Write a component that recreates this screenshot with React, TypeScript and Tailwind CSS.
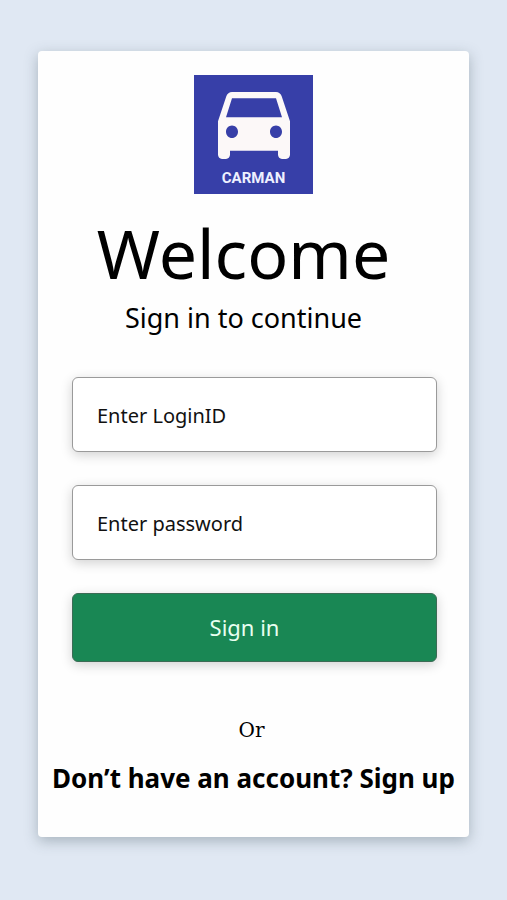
import { useState } from "react";

interface FieldProps {
  id: string;
  type: string;
  label: string;
  value: string;
  onChange: (value: string) => void;
}

const Logo: React.FC = () => {
  return (
    <div className="flex flex-col items-center w-[119px] bg-[#373fa8] pt-[17px] pb-1">
      <svg
        viewBox="3 5 18 16"
        preserveAspectRatio="none"
        className="w-[72px] h-[67px] fill-[#fcf8f8]"
        aria-hidden="true"
      >
        <path d="M18.92 6.01C18.72 5.42 18.16 5 17.5 5h-11c-.66 0-1.21.42-1.42 1.01L3 12v8c0 .55.45 1 1 1h1c.55 0 1-.45 1-1v-1h12v1c0 .55.45 1 1 1h1c.55 0 1-.45 1-1v-8l-2.08-5.99zM6.5 16c-.83 0-1.5-.67-1.5-1.5S5.67 13 6.5 13s1.5.67 1.5 1.5S7.33 16 6.5 16zm11 0c-.83 0-1.5-.67-1.5-1.5s.67-1.5 1.5-1.5 1.5.67 1.5 1.5-.67 1.5-1.5 1.5zM5 11l1.5-4.5h11L19 11H5z" />
      </svg>
      <span className="mt-[7px] font-['Roboto',sans-serif] font-bold text-[15px] leading-6 text-[#eef0ff]">
        CARMAN
      </span>
    </div>
  );
};

const Field: React.FC<FieldProps> = ({ id, type, label, value, onChange }) => {
  return (
    <input
      id={id}
      type={type}
      aria-label={label}
      placeholder={label}
      value={value}
      onChange={(e) => onChange(e.target.value)}
      className="block w-full h-[75px] px-6 pt-0.5 rounded-md border border-[#9a9a9a] bg-white text-[20px] text-black placeholder:text-[#111111] shadow-[0_3px_12px_rgba(0,0,0,0.18)]"
    />
  );
};

const App: React.FC = () => {
  const [loginId, setLoginId] = useState("");
  const [password, setPassword] = useState("");

  return (
    <div className="min-h-screen bg-[#e0e8f3] px-[38px] pt-[51px] pb-[62px] font-['Noto_Sans',sans-serif] text-black">
      <main className="flex flex-col items-center rounded-sm bg-[#fefefe] pt-6 pb-[43px] shadow-[0_4px_14px_rgba(60,80,90,0.35)]">
        <Logo />

        <header className="mt-[14px] pr-5 text-center">
          <h1 className="text-[68px] leading-[90px]">Welcome</h1>
          <p className="text-[27px] leading-10">Sign in to continue</p>
        </header>

        <form
          className="flex flex-col gap-[33px] w-full mt-[39px] pl-[34px] pr-8"
          onSubmit={(e) => e.preventDefault()}
        >
          <Field
            id="loginId"
            type="text"
            label="Enter LoginID"
            value={loginId}
            onChange={setLoginId}
          />
          <Field
            id="password"
            type="password"
            label="Enter password"
            value={password}
            onChange={setPassword}
          />
          <button
            type="submit"
            className="h-[69px] pr-5 rounded-md border border-[#3c6b55] bg-[#198754] text-[22px] text-[#e8fff0] shadow-[0_3px_12px_rgba(0,0,0,0.18)]"
          >
            Sign in
          </button>
        </form>

        <p className="mt-[52px] pr-1 font-['DejaVu_Serif',serif] text-[20px] leading-8">
          Or
        </p>
        <a
          href="#signup"
          className="mt-4 font-bold text-[26px] leading-8 whitespace-nowrap"
        >
          Don’t have an account? Sign up
        </a>
      </main>
    </div>
  );
};

export default App;
